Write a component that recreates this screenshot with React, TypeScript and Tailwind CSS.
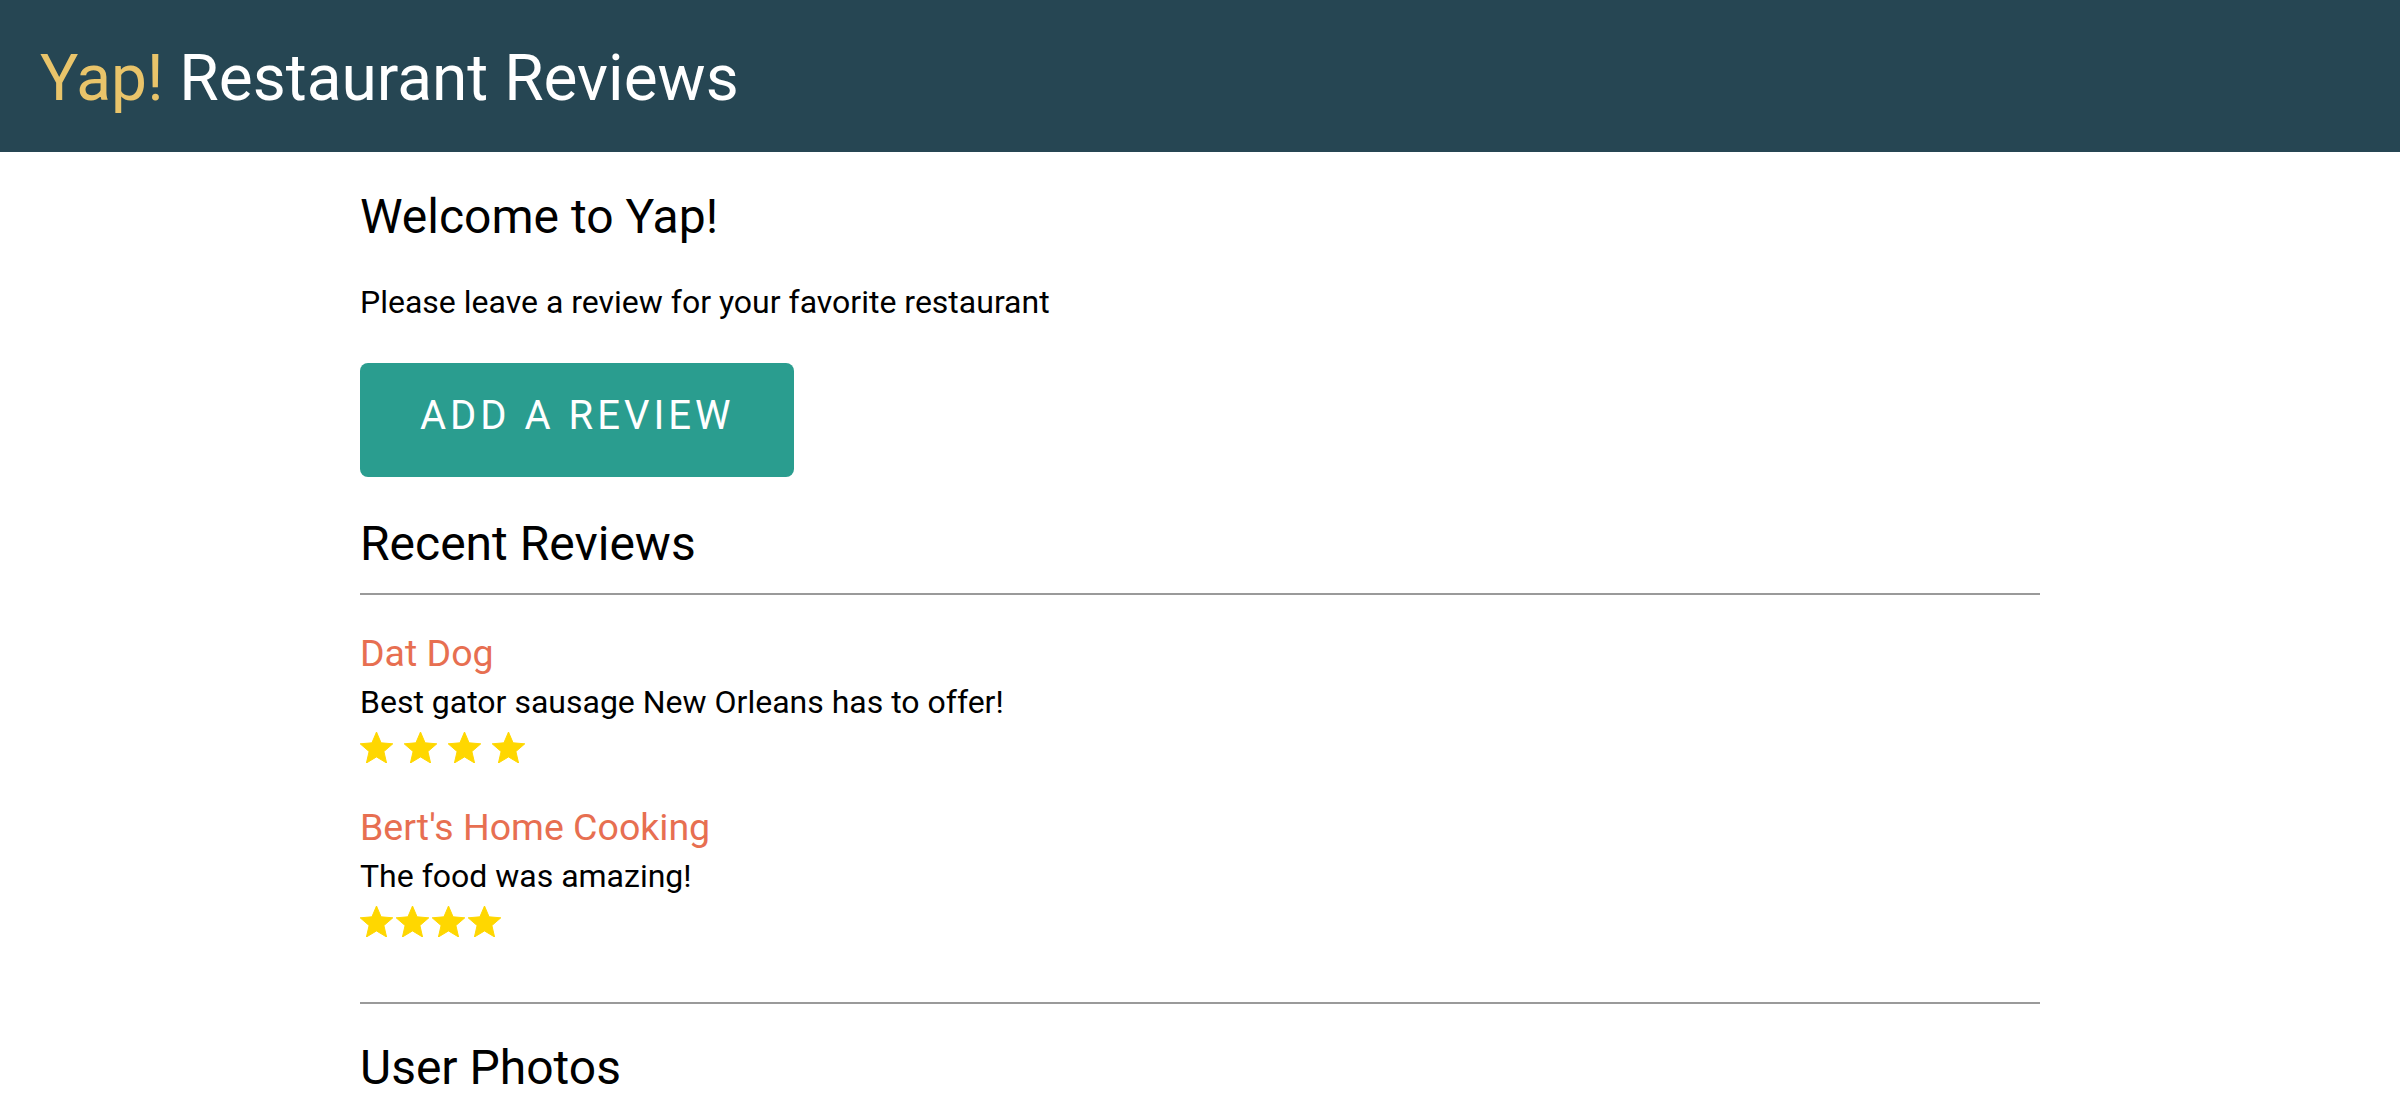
import { ReactNode } from "react";

type Review = {
  name: string;
  text: string;
  stars: number;
  gap: string;
};

const reviews: Review[] = [
  { name: "Dat Dog", text: "Best gator sausage New Orleans has to offer!", stars: 4, gap: "gap-[11px]" },
  { name: "Bert's Home Cooking", text: "The food was amazing!", stars: 4, gap: "gap-[3px]" },
];

function Star() {
  return (
    <svg viewBox="2 2 20 19" className="w-[33px] h-[31px]" aria-hidden="true">
      <path
        d="M12 17.27L18.18 21l-1.64-7.03L22 9.24l-7.19-.61L12 2 9.19 8.63 2 9.24l5.46 4.73L5.82 21z"
        fill="#ffd700"
        stroke="#ffd700"
        strokeWidth="0.6"
        strokeLinejoin="round"
      />
    </svg>
  );
}

function Heading({ children, className }: { children: ReactNode; className: string }) {
  return <h2 className={`text-[48px] leading-[56px] font-normal text-black ${className}`}>{children}</h2>;
}

export default function App() {
  return (
    <div className="min-h-screen bg-white font-['Roboto','Liberation_Sans',sans-serif]">
      <header className="h-[152px] bg-[#264653] pl-[40px] pt-[47px]">
        <h1 className="text-[64px] leading-[64px] font-normal text-white">
          <span className="text-[#e9c46a]">Yap!</span> Restaurant Reviews
        </h1>
      </header>

      <main className="w-[70%] mx-auto">
        <Heading className="mt-[37px]">Welcome to Yap!</Heading>
        <p className="mt-[37px] text-[32px] leading-[40px] text-black">
          Please leave a review for your favorite restaurant
        </p>
        <button className="mt-[41px] h-[114px] px-[60px] pb-[8px] flex items-center rounded-[8px] bg-[#2a9d8f] text-white text-[40px] leading-[46px] tracking-[4px]">
          ADD A REVIEW
        </button>

        <Heading className="mt-[39px]">Recent Reviews</Heading>
        <hr className="mt-[21px] border-0 h-[2px] bg-[#9a9a9a]" />

        {reviews.map((review, i) => (
          <div key={review.name} className={i === 0 ? "mt-[36px]" : "mt-[42px]"}>
            <h3 className="text-[37.5px] leading-[44px] font-normal text-[#e76f51]">{review.name}</h3>
            <p className="mt-[7px] text-[32px] leading-[40px] text-black">{review.text}</p>
            <div className={`mt-[10px] flex ${review.gap}`}>
              {Array.from({ length: review.stars }).map((_, s) => (
                <Star key={s} />
              ))}
            </div>
          </div>
        ))}

        <hr className="mt-[65px] border-0 h-[2px] bg-[#9a9a9a]" />
        <Heading className="mt-[36px]">User Photos</Heading>
      </main>
    </div>
  );
}
